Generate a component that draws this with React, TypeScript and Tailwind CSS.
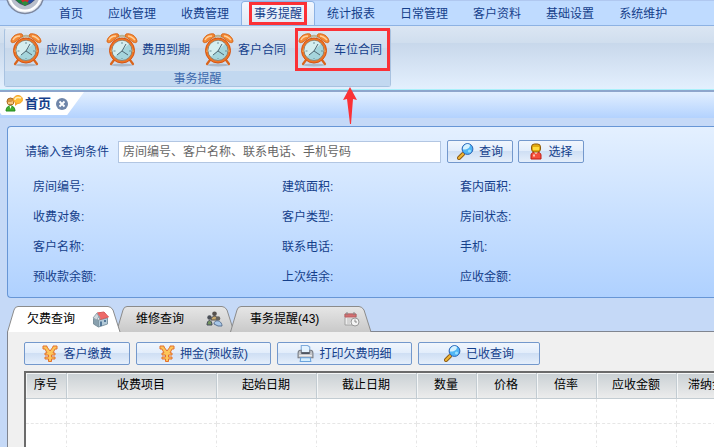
import { useState } from 'react';
import type { ReactNode } from 'react';

const menus = ['首页', '应收管理', '收费管理', '事务提醒', '统计报表', '日常管理', '客户资料', '基础设置', '系统维护'];

const reminders = ['应收到期', '费用到期', '客户合同', '车位合同'];

const fields = [
  '房间编号:', '建筑面积:', '套内面积:',
  '收费对象:', '客户类型:', '房间状态:',
  '客户名称:', '联系电话:', '手机:',
  '预收款余额:', '上次结余:', '应收金额:',
];

const columns = [
  { name: '序号', width: 'w-[40px]' },
  { name: '收费项目', width: 'w-[150px]' },
  { name: '起始日期', width: 'w-[100px]' },
  { name: '截止日期', width: 'w-[100px]' },
  { name: '数量', width: 'w-[60px]' },
  { name: '价格', width: 'w-[60px]' },
  { name: '倍率', width: 'w-[60px]' },
  { name: '应收金额', width: 'w-[80px]' },
  { name: '滞纳金', width: 'w-[60px]' },
];

function ClockIcon() {
  return (
    <svg width="32" height="34" viewBox="0 0 32 34">
      <ellipse cx="16" cy="32" rx="11" ry="1.5" fill="#9aa9bb" opacity="0.7" />
      <path d="M8 27 5 31M24 27l3 4" stroke="#d9641b" strokeWidth="2.2" strokeLinecap="round" />
      <path d="M13 5c0-3 6-3 6 0" fill="none" stroke="#b9b394" strokeWidth="2" />
      <path d="M1 8C2 3 7 0 12 1l1 2-8 6c-2 1-4 1-4-1Z" fill="#f58a35" stroke="#d8691e" />
      <path d="M31 8c-1-5-6-8-11-7l-1 2 8 6c2 1 4 1 4-1Z" fill="#f58a35" stroke="#d8691e" />
      <path d="M3 7c1-2 4-4 7-4M22 3c3 0 5 2 7 4" fill="none" stroke="#ffd09a" strokeWidth="1.5" />
      <circle cx="16" cy="17.5" r="12.5" fill="#ee7424" stroke="#d55412" />
      <path d="M5 19a11.5 11.5 0 0 1 22 0" fill="none" stroke="#fba24c" strokeWidth="2" />
      <circle cx="16" cy="17.5" r="10" fill="#a5d5dc" stroke="#8e8272" />
      <path d="M6.500 17.500A9.500 9.500 0 0 1 23 11L9 23.500a9.500 9.500 0 0 1-2.500-6Z" fill="#d5eef0" />
      <path d="m20 11-4 7 6 4M16 18l-5 4" fill="none" stroke="#526b76" />
      <path d="M16 9v2M16 25v1M7.500 18h2M23 18h2" stroke="#6d929c" />
    </svg>
  );
}

function SearchIcon() {
  return (
    <svg width="17" height="17" viewBox="0 0 17 17">
      <path d="m6 11-4 4" stroke="#8a5a14" strokeWidth="4" strokeLinecap="round" />
      <path d="m6 11-4 4" stroke="#f2b632" strokeWidth="2.200" strokeLinecap="round" />
      <circle cx="10.500" cy="6" r="5.400" fill="#4fb6f5" stroke="#2c62b4" />
      <path d="M6 6.500a4.500 4.500 0 0 1 7-4.500c0 3-3 5-7 4.500Z" fill="#d5f1ff" />
      <circle cx="12.500" cy="8" r="1.600" fill="#98e0ff" />
    </svg>
  );
}

function PersonIcon() {
  return (
    <svg width="14" height="17" viewBox="1 0 14 17">
      <path d="M3 16v-4c0-2 2-3 5-3s5 1 5 3v4Z" fill="#f4503c" stroke="#c01c14" />
      <path d="M5 11.500h2v2H5Z" fill="#ffc3b0" />
      <path d="m6 9 2 2 2-2" fill="#fff" />
      <rect x="3.500" y="1" width="9" height="8" rx="3" fill="#e3ac10" stroke="#8f5b0b" />
      <path d="M5 4h6v3H5Z" fill="#ffdc3c" />
    </svg>
  );
}

function YenIcon() {
  return (
    <svg width="16" height="17" viewBox="0 0 16 17">
      <path
        d="M1 1h4v1l3 4 3-4V1h4v3h-2l-2 4h2v2H9.500v2H13v2H9.500v2.500h-3V14H3v-2h3.500v-2H3V8h2L3 4H1Z"
        fill="#fcc65a"
        stroke="#e4702c"
        strokeLinejoin="round"
      />
    </svg>
  );
}

function PrinterIcon() {
  return (
    <svg width="17" height="17" viewBox="0 0 16 16">
      <path d="M4 7V.5h6L12 2v5Z" fill="#e3f3ff" stroke="#7eaadb" />
      <path d="M1 8c0-2 1-3 2-3h1v2h8V5h1c1 0 2 1 2 3v4H1Z" fill="#c4c6ca" stroke="#777c84" />
      <path d="M4 7h8v1.500H4Z" fill="#4c5560" />
      <path d="M2 10h12" stroke="#f2f2f2" />
      <path d="M3.500 12h9l.5 3.500H3Z" fill="#d5efff" stroke="#6ba4dd" />
    </svg>
  );
}

function HouseIcon() {
  return (
    <svg width="17" height="17" viewBox="0 0 17 17">
      <path d="m1.500 7 5 2v7l-5-3Z" fill="#88a0ae" stroke="#7d919d" />
      <path d="m6.500 9 9-2v6l-9 3Z" fill="#b3cad8" stroke="#8399a5" />
      <path d="m5 2 7-1 4.500 5L8 8.500Z" fill="#ee6a68" stroke="#d85a5a" />
      <path d="M5 2 1 7l4 2 2-4 1 3Z" fill="#cfd9df" stroke="#93a4af" />
      <path d="M8 10.500h2V15H8ZM12 9h2v2h-2Z" fill="#54789a" />
    </svg>
  );
}

function PeopleIcon() {
  return (
    <svg width="17" height="16" viewBox="0 0 17 16">
      <circle cx="8.500" cy="2.800" r="2.300" fill="#55504d" />
      <path d="M5 9c0-5 7-5 7 0Z" fill="#c9a96c" stroke="#55504d" />
      <circle cx="3.500" cy="6.500" r="2.200" fill="#4b5058" />
      <path d="M1 14c0-6 5-6 5 0Z" fill="#759461" stroke="#444b58" />
      <circle cx="12" cy="7.500" r="2.300" fill="#67645f" />
      <path d="M8 13c0-5 8-4 8 2h-4Z" fill="#a8c7e8" stroke="#5b7292" />
    </svg>
  );
}

function CalendarIcon() {
  return (
    <svg width="16" height="15" viewBox="0 0 16 15">
      <path d="M1 2h11v11H1Z" fill="#ececec" stroke="#a2a2a2" />
      <path d="M1 2h11v3H1Z" fill="#d36e70" stroke="#b86163" />
      <path d="M3 0v3M10 0v3" stroke="#858585" />
      <path d="M3 7h6M3 9h4M3 11h3" stroke="#bbb" />
      <circle cx="11" cy="10" r="4" fill="#f4f4f4" stroke="#999" />
      <path d="M11 7.500V10h2" fill="none" stroke="#888" />
    </svg>
  );
}

function ChatUserIcon() {
  return (
    <svg width="18" height="17" viewBox="0 0 18 17">
      <path d="M1 16c0-7 9-7 9 0Z" fill="#43ae31" stroke="#248b20" />
      <path d="m4.500 11 1 3 1-3" fill="#fff" />
      <circle cx="5.500" cy="6.500" r="3.500" fill="#d7943c" stroke="#a86924" />
      <path d="M3 7c2 0 4 0 5-1v3H3Z" fill="#f5c580" />
      <path d="m10 7 0 4 4-3" fill="#f6a41e" />
      <ellipse cx="13" cy="4.500" rx="4.500" ry="4" fill="#ffbd38" stroke="#f3a42c" />
      <path d="M10 5c0-3 4-3 6-2" fill="none" stroke="#fff0bc" strokeWidth="1.500" />
    </svg>
  );
}

function Logo() {
  return (
    <svg className="absolute left-[6px] -top-px" width="38" height="15" viewBox="0 0 38 15">
      <circle cx="19" cy="-5" r="18.500" fill="#e4e8ef" stroke="#7d88a0" strokeWidth="1.500" />
      <circle cx="19" cy="-5" r="15.500" fill="#b9bfcc" stroke="#fff" strokeWidth="2" />
      <path d="M9 0h20l-5 4-5 2-5-2Z" fill="#434a63" />
      <path d="M10 0h6v3h-3Z" fill="#19803a" />
      <path d="M22 0h6l-3 3h-3Z" fill="#274ca5" />
      <path d="M15 0h8l-2 3h-4Z" fill="#d02b2b" />
      <path d="m15 3 4-2 4 2-4 3Z" fill="#2f8b3e" />
    </svg>
  );
}

function ActionButton({ icon, width, children }: { icon: ReactNode; width: string; children: ReactNode }) {
  return (
    <button
      type="button"
      className={`${width} flex h-[23px] shrink-0 items-center justify-center gap-[5px] rounded-[2px] border border-[#7398cc] bg-[linear-gradient(#f1f6fd,#e2edfb_48%,#cfdff4_50%,#e5effb)] text-[#153f8b] hover:brightness-105`}
    >
      {icon}
      {children}
    </button>
  );
}

interface SlantTabProps {
  label: string;
  icon: ReactNode;
  width: string;
  size: number;
  active: boolean;
  onClick: () => void;
}

function SlantTab({ label, icon, width, size, active, onClick }: SlantTabProps) {
  return (
    <button
      type="button"
      role="tab"
      aria-selected={active}
      onClick={onClick}
      className={`${width} ${active ? 'z-10' : ''} relative -mr-[5px] flex h-[26px] shrink-0 items-center justify-between pl-[20px] pr-[12px] text-black`}
    >
      <svg className="absolute inset-0 h-full w-full" viewBox={`0 0 ${size} 26`} preserveAspectRatio="none">
        <defs>
          <linearGradient id="tabGray" x1="0" y1="0" x2="0" y2="1">
            <stop offset="0" stopColor="#e6e6e6" />
            <stop offset="1" stopColor="#c9c9c9" />
          </linearGradient>
        </defs>
        <path
          d={`M.5 26 7 4Q8 .5 11 .5H${size - 13}Q${size - 10} .5 ${size - 8} 4L${size - 1} 26`}
          fill={active ? '#fff' : 'url(#tabGray)'}
          stroke="#8b8b8b"
        />
      </svg>
      <span className="relative">{label}</span>
      <span className="relative">{icon}</span>
    </button>
  );
}

export default function App() {
  const [menu, setMenu] = useState('事务提醒');
  const [tab, setTab] = useState(0);
  const [keyword, setKeyword] = useState('');

  return (
    <div className="flex min-h-screen flex-col overflow-hidden bg-[#c5d9f7] font-['Liberation_Sans','Noto_Sans_CJK_SC',sans-serif] text-[12px] leading-[16px] text-[#153f8b]">
      {/* Menu bar */}
      <header className="relative border-t border-[#b0c8f0] bg-[#bfdbff]">
        <Logo />
        <nav className="flex h-[25px] items-end gap-px overflow-hidden border-b border-[#8db2e3] pl-[47px]">
          {menus.map((name) => (
            <button
              key={name}
              type="button"
              onClick={() => setMenu(name)}
              className={`relative h-[23px] shrink-0 rounded-t-[3px] px-[12px] ${
                name === menu ? 'bg-[linear-gradient(#f2f7fe,#dfe9f6)] shadow-[0_0_0_1px_#8db2e3]' : ''
              }`}
            >
              {name}
              {name === '事务提醒' && <span className="absolute inset-x-[7px] inset-y-0 border-3 border-[#fb3136]" />}
            </button>
          ))}
        </nav>
      </header>

      {/* Ribbon */}
      <div className="border-b-2 border-[#8ea6cc] bg-[linear-gradient(#dbe6f3,#d0deee_26%,#c8d8eb_27%,#e4f0fe)] px-[4px] pt-[2px]">
        <section className="relative w-[387px] rounded-[3px] border border-[#a8c2e0] border-t-[#e8f0f9] bg-[linear-gradient(#dde7f3,#d0ddee_33%,#c8d8eb_34%,#dae6f4)]">
          <div className="flex h-[42px] items-center gap-[12px] pl-[5px]">
            {reminders.map((name) => (
              <button key={name} type="button" className="flex w-[84px] shrink-0 items-center gap-[4px] whitespace-nowrap">
                <span className="shrink-0">
                  <ClockIcon />
                </span>
                {name}
              </button>
            ))}
          </div>
          <h2 className="h-[15px] bg-[#c2d8f0] text-center leading-[17px] text-[#3c68ac]">事务提醒</h2>
          <span className="pointer-events-none absolute -top-px right-0 h-[43px] w-[95px] border-3 border-[#fb3136]" />
          <svg className="pointer-events-none absolute left-[337px] top-[58px] z-20" width="16" height="38" viewBox="0 0 16 38">
            <path d="M8 0 1 13l4-1 3 25h1l2-25 4 1Z" fill="#fb3136" />
          </svg>
        </section>
        <div className="-mx-[4px] mt-[2px] h-px bg-[#a9f0fa]" />
      </div>

      {/* Page tabs */}
      <div className="h-[26px] bg-[linear-gradient(#e2efff,#b3d2fe)]">
        <div className="flex h-[23px] w-[84px] items-center bg-white pl-[5px] [clip-path:polygon(0_0,100%_0,80%_100%,2%_100%,0_90%)]">
          <ChatUserIcon />
          <a href="#home" className="ml-[2px] text-[13px] font-bold">
            首页
          </a>
          <button type="button" aria-label="关闭" className="ml-[5px]">
            <svg width="12" height="12" viewBox="0 0 12 12">
              <circle cx="6" cy="6" r="6" fill="#7086a9" />
              <path d="m3.500 3.500 5 5m0-5-5 5" stroke="#fff" strokeWidth="1.800" />
            </svg>
          </button>
        </div>
      </div>

      {/* Query panel */}
      <section className="ml-[7px] mt-[8px] rounded-l-[4px] border border-r-0 border-[#6796d6] bg-[linear-gradient(#e4f0ff,#afd1ff)] pb-[5px] pt-[13px]">
        <form className="flex items-center pl-[17px]" onSubmit={(e) => e.preventDefault()}>
          <label htmlFor="keyword" className="w-[93px] shrink-0">
            请输入查询条件
          </label>
          <input
            id="keyword"
            type="text"
            value={keyword}
            onChange={(e) => setKeyword(e.target.value)}
            placeholder="房间编号、客户名称、联系电话、手机号码"
            className="mr-[6px] h-[22px] w-[323px] border border-[#b2c6e2] bg-white px-[4px] text-black outline-none placeholder:text-[#666]"
          />
          <div className="flex gap-[5px]">
            <ActionButton icon={<SearchIcon />} width="w-[66px]">查询</ActionButton>
            <ActionButton icon={<PersonIcon />} width="w-[66px]">选择</ActionButton>
          </div>
        </form>
        <div className="mt-[9px] grid auto-rows-[30px] grid-cols-[249px_178px_1fr] items-center pl-[25px]">
          {fields.map((name) => (
            <span key={name}>{name}</span>
          ))}
        </div>
      </section>

      {/* Detail tabs */}
      <div role="tablist" className="ml-[7px] mt-[8px] flex">
        <SlantTab label="欠费查询" icon={<HouseIcon />} width="w-[114px]" size={114} active={tab === 0} onClick={() => setTab(0)} />
        <SlantTab label="维修查询" icon={<PeopleIcon />} width="w-[119px]" size={119} active={tab === 1} onClick={() => setTab(1)} />
        <SlantTab label="事务提醒(43)" icon={<CalendarIcon />} width="w-[142px]" size={142} active={tab === 2} onClick={() => setTab(2)} />
      </div>
      <section className="-mt-px ml-[7px] flex flex-1 flex-col border-l border-t border-[#808590] bg-[#f0f0f0] pl-[16px] pt-[10px]">
        <div className="flex gap-[6px]">
          <ActionButton icon={<YenIcon />} width="w-[106px]">客户缴费</ActionButton>
          <ActionButton icon={<YenIcon />} width="w-[135px]">押金(预收款)</ActionButton>
          <ActionButton icon={<PrinterIcon />} width="w-[135px]">打印欠费明细</ActionButton>
          <ActionButton icon={<SearchIcon />} width="w-[122px]">已收查询</ActionButton>
        </div>
        <div className="mt-[6px] flex-1 overflow-hidden border-l-2 border-t-2 border-[#6b6b6b] bg-white">
          <table className="w-[710px] table-fixed border-collapse text-black">
            <thead>
              <tr className="h-[25px] bg-[linear-gradient(#c9d0d4,#ececec)]">
                {columns.map((col) => (
                  <th key={col.name} className={`${col.width} border-b border-r border-[#c3ccd2] font-normal shadow-[inset_1px_1px_0_#f4f6f7]`}>
                    {col.name}
                  </th>
                ))}
              </tr>
            </thead>
            <tbody>
              {[1, 2].map((row) => (
                <tr key={row} className="h-[25px]">
                  {columns.map((col) => (
                    <td key={col.name} className="border-b border-r border-dashed border-[#e6e6e6]" />
                  ))}
                </tr>
              ))}
            </tbody>
          </table>
        </div>
      </section>
    </div>
  );
}
